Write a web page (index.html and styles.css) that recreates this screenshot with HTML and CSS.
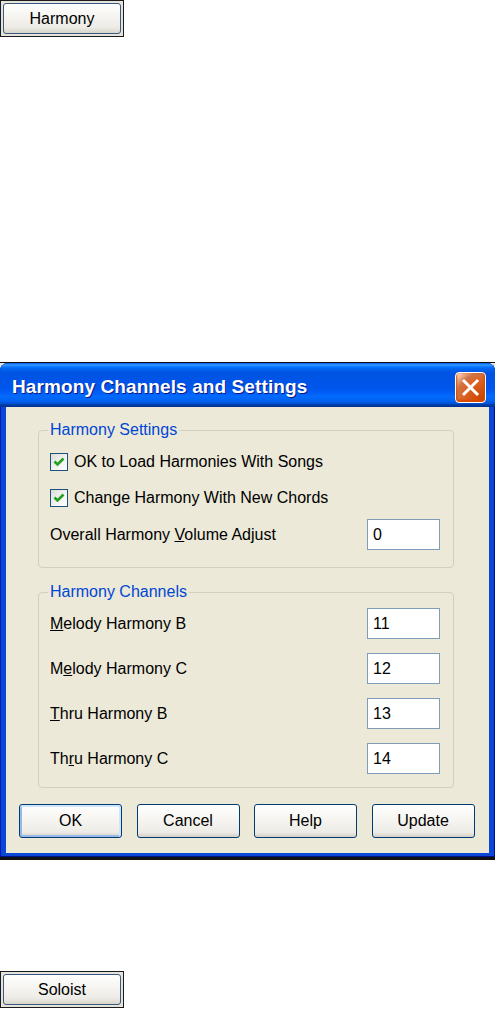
FILE: index.html
```html
<!DOCTYPE html>
<html>
<head>
<meta charset="utf-8">
<link rel="stylesheet" href="styles.css">
</head>
<body>
<div class="page">
  <div class="tool-frame"><div class="tool-btn">Harmony</div></div>

  <div class="shot">
    <div class="dialog">
      <div class="titlebar">
        <span class="title">Harmony Channels and Settings</span>
        <span class="close">
          <svg width="31" height="31" viewBox="0 0 31 31"><path d="M9 9 L22 22 M22 9 L9 22" stroke="#fff" stroke-width="3" stroke-linecap="square" fill="none"/></svg>
        </span>
      </div>
      <div class="client">
        <fieldset class="group group-settings">
          <legend>Harmony Settings</legend>
          <div class="check-row r1">
            <span class="check"><svg width="16" height="16" viewBox="0 0 16 16"><path d="M3.5 7.5 L6.5 10.5 L12.5 4.5" stroke="#21a121" stroke-width="2.6" fill="none"/></svg></span>
            <span>OK to Load Harmonies With Songs</span>
          </div>
          <div class="check-row r2">
            <span class="check"><svg width="16" height="16" viewBox="0 0 16 16"><path d="M3.5 7.5 L6.5 10.5 L12.5 4.5" stroke="#21a121" stroke-width="2.6" fill="none"/></svg></span>
            <span>Change Harmony With New Chords</span>
          </div>
          <div class="field-row r3">
            <span>Overall Harmony <u>V</u>olume Adjust</span>
            <span class="edit">0</span>
          </div>
        </fieldset>

        <fieldset class="group group-channels">
          <legend>Harmony Channels</legend>
          <div class="field-row first">
            <span><u>M</u>elody Harmony B</span>
            <span class="edit">11</span>
          </div>
          <div class="field-row">
            <span>M<u>e</u>lody Harmony C</span>
            <span class="edit">12</span>
          </div>
          <div class="field-row">
            <span><u>T</u>hru Harmony B</span>
            <span class="edit">13</span>
          </div>
          <div class="field-row">
            <span>Th<u>r</u>u Harmony C</span>
            <span class="edit">14</span>
          </div>
        </fieldset>

        <div class="buttons">
          <div class="btn default">OK</div>
          <div class="btn">Cancel</div>
          <div class="btn">Help</div>
          <div class="btn">Update</div>
        </div>
      </div>
    </div>
  </div>

  <div class="tool-frame solo"><div class="tool-btn">Soloist</div></div>
</div>
</body>
</html>
```

FILE: styles.css
```css
html, body {
  margin: 0;
  padding: 0;
  background: #ffffff;
}
body {
  font-family: "Liberation Sans", Arial, sans-serif;
  font-size: 16px;
  color: #000;
}
.page {
  display: flex;
  flex-direction: column;
  width: 495px;
}

/* small toolbar buttons */
.tool-frame {
  width: 124px;
  height: 37px;
  box-sizing: border-box;
  border: 1px solid #1b1b1b;
  padding: 2px;
  background: #e4e3dc;
}
.tool-frame.solo {
  margin-top: 111px;
}
.tool-btn {
  height: 100%;
  box-sizing: border-box;
  border: 1px solid #3b5a82;
  border-radius: 3px;
  background: linear-gradient(#ffffff 0%, #f6f5f1 40%, #ecebe6 80%, #d8d4c8 100%);
  display: flex;
  align-items: center;
  justify-content: center;
  font-size: 16px;
}

/* dialog */
.shot {
  margin-top: 325px;
  border-top: 1px solid #111;
  border-bottom: 3px solid #111;
  background: #e6e6e6;
}
.dialog {
  background: #0a47d6;
  border-radius: 8px 8px 0 0;
  padding: 0 6px 4px;
  box-shadow: inset 1px 0 0 #0019b0, inset -1px 0 0 #00138c, inset 0 -1px 0 #00138c;
}
.titlebar {
  margin: 0 -6px;
  height: 44px;
  box-sizing: border-box;
  border-radius: 8px 8px 0 0;
  background: linear-gradient(to bottom, #0058ee 0%, #3593ff 4%, #288eff 6%, #127dff 8%, #036ffc 10%, #0262ee 14%, #0057e5 20%, #0054e3 24%, #0055eb 56%, #005bf5 66%, #026afe 76%, #0062ef 86%, #0052d6 92%, #0040ab 94%, #003092 100%);
  display: flex;
  align-items: flex-start;
  justify-content: space-between;
  padding: 0 9px 0 12px;
}
.title {
  color: #fff;
  font-weight: bold;
  font-size: 19px;
  line-height: 22px;
  margin-top: 13px;
  text-shadow: 1px 1px 0 #0a1883;
  letter-spacing: 0.1px;
}
.close {
  margin-top: 9px;
  width: 31px;
  height: 31px;
  box-sizing: border-box;
  border: 1px solid #fff;
  border-radius: 4px;
  background: radial-gradient(circle at 90% 90%, #cc4600 0%, #dc6527 55%, #cd7546 70%, #ffccb2 90%, #ffffff 100%);
  box-shadow: inset 0 -1px 2px 1px #da4600;
  display: flex;
  align-items: center;
  justify-content: center;
}
.close svg {
  display: block;
  margin: -1px;
}

.client {
  background: #ece9d8;
  padding: 14px 0 15px;
}

.group {
  margin: 0 0 0 32px;
  width: 416px;
  box-sizing: border-box;
  border: 1px solid #d0d0bf;
  border-radius: 4px;
  padding: 0 13px 17px 11px;
  min-width: 0;
}
.group legend {
  color: #0046d5;
  padding: 0 2px;
  margin-left: -2px;
  line-height: 18px;
  font-size: 16px;
}
.group-channels {
  margin-top: 15px;
  padding-bottom: 13px;
}

.check-row {
  display: flex;
  align-items: center;
  height: 22px;
}
.check-row.r1 { margin-top: 12px; }
.check-row.r2 { margin-top: 14px; }
.check {
  width: 18px;
  height: 18px;
  box-sizing: border-box;
  border: 1px solid #1c5180;
  background: linear-gradient(135deg, #dcdcd7 0%, #f4f4f1 60%, #ffffff 100%);
  margin-right: 6px;
  display: flex;
  align-items: center;
  justify-content: center;
}
.check svg { display: block; }

.field-row {
  display: flex;
  align-items: center;
  justify-content: space-between;
  height: 31px;
  margin-top: 14px;
}
.field-row.r3 { margin-top: 10px; }
.field-row.first { margin-top: 7px; }
.edit {
  width: 73px;
  height: 31px;
  box-sizing: border-box;
  border: 1px solid #7f9db9;
  background: #fff;
  padding-left: 5px;
  display: flex;
  align-items: center;
}

.buttons {
  display: flex;
  gap: 14.5px;
  margin-top: 16px;
  padding-left: 13px;
}
.btn {
  width: 103px;
  height: 34px;
  box-sizing: border-box;
  border: 1px solid #003c74;
  border-radius: 3px;
  background: linear-gradient(#ffffff 0%, #f6f5f1 45%, #ecebe6 85%, #d6d0c5 100%);
  display: flex;
  align-items: center;
  justify-content: center;
}
.btn.default {
  box-shadow: inset -1px 1px 0 1px #cee7ff, inset 1px -1px 0 1px #98b8ea;
}
```
